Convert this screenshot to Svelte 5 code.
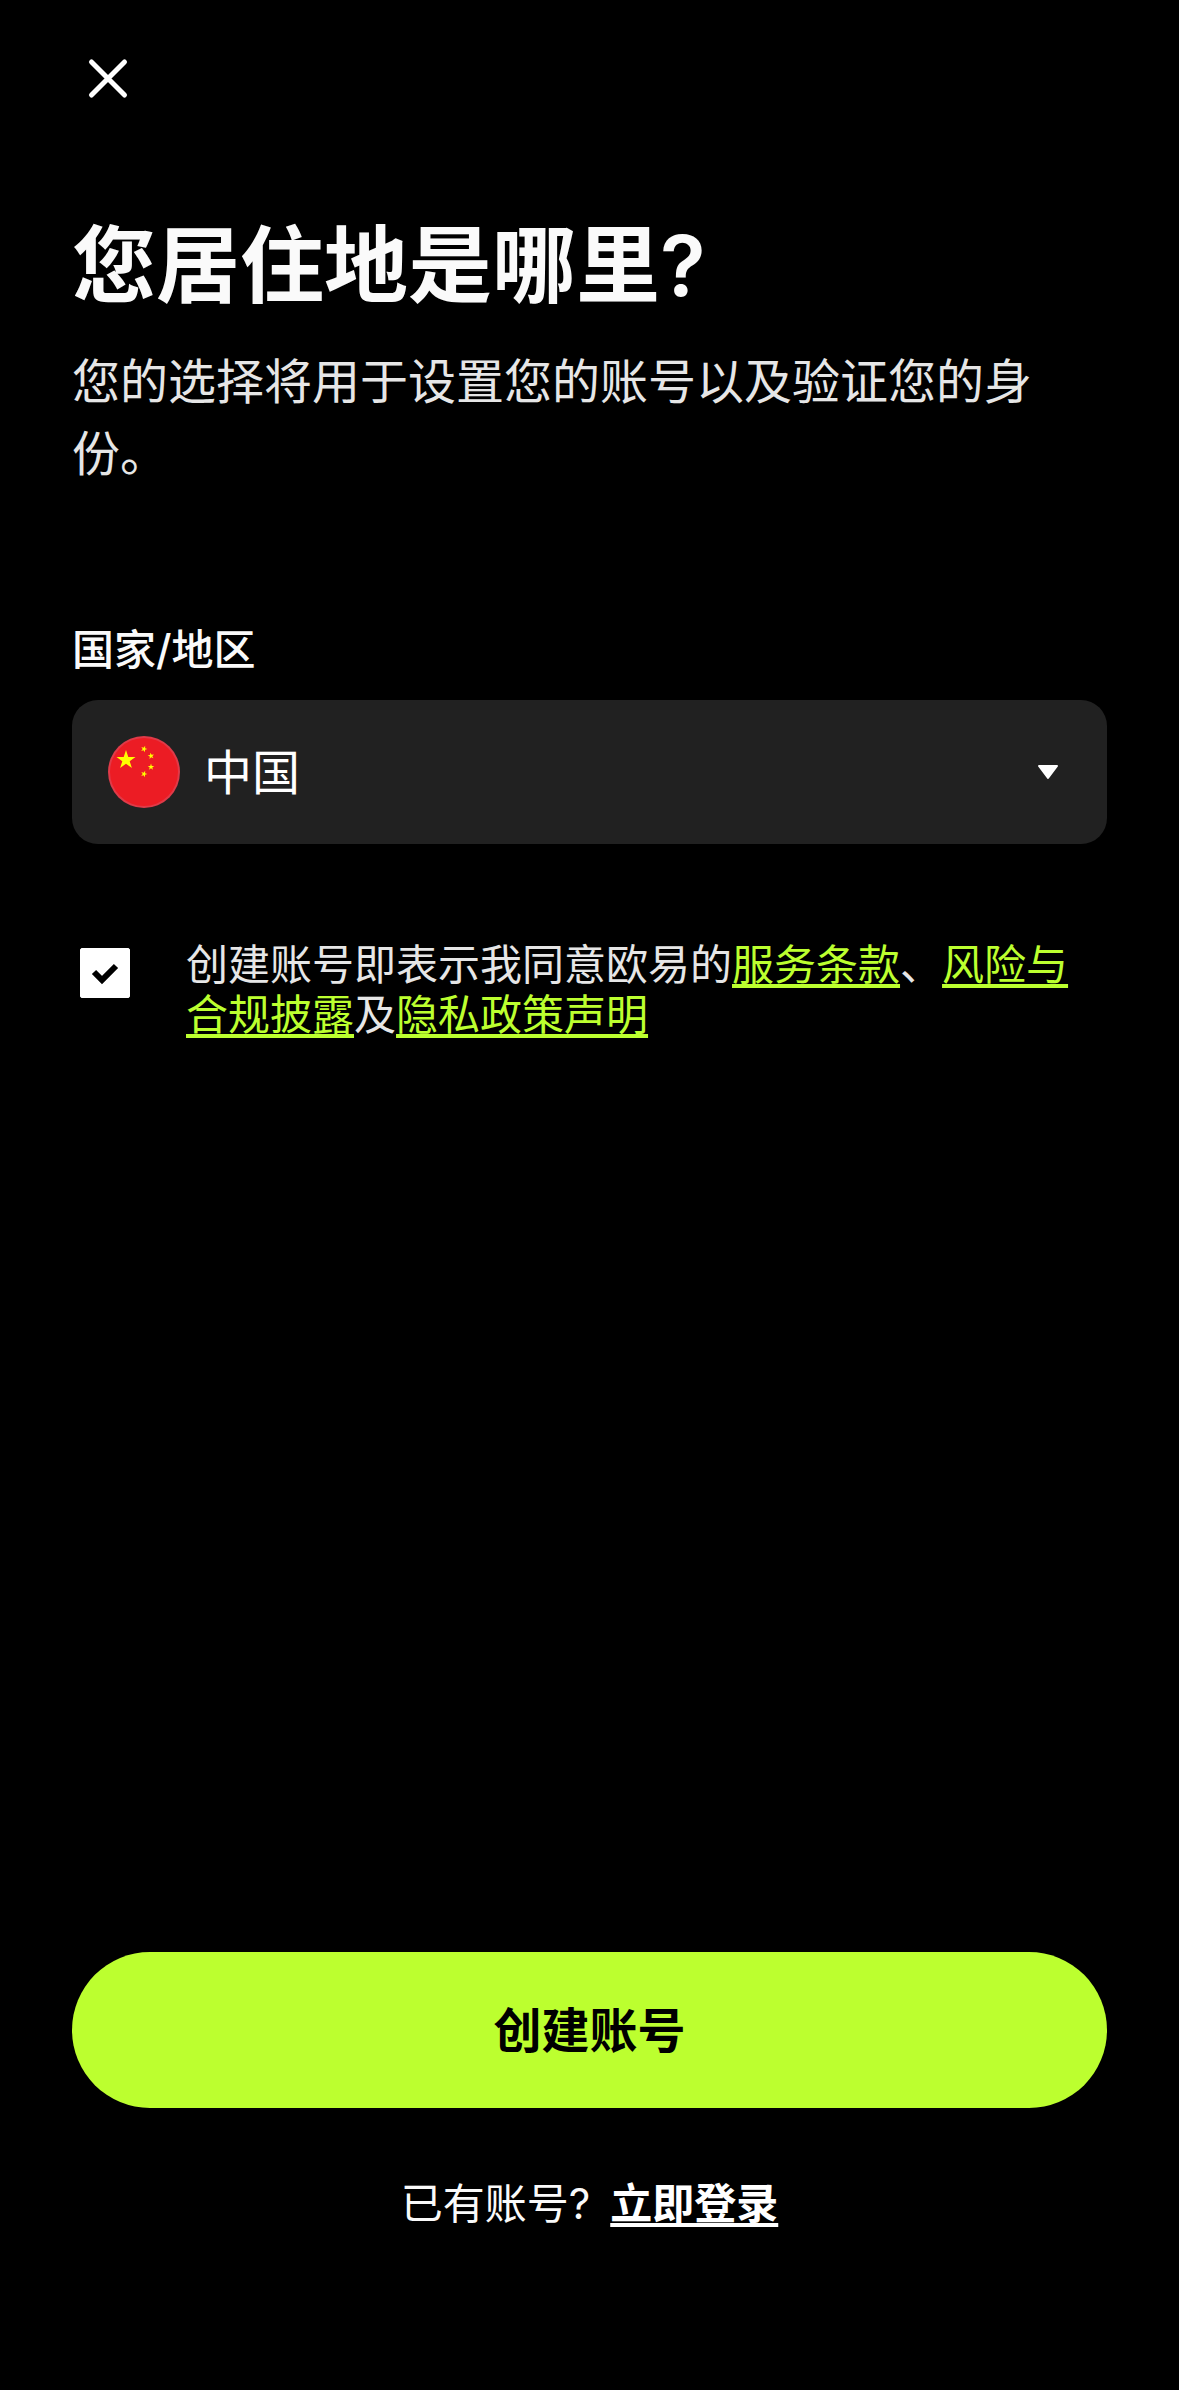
<script lang="ts">
    let country = "CN";
    let agreed = true;

    const countries = [
        { code: "CN", name: "中国" },
    ];

    // small stars of the flag: centre and rotation
    const smallStars = [
        { x: 36, y: 13, r: 20 },
        { x: 43, y: 20, r: -10 },
        { x: 43, y: 31, r: 0 },
        { x: 36, y: 38, r: 20 },
    ];

    const star = "M0 -10 L2.3 -3.1 L9.5 -3.1 L3.7 1.2 L5.9 8.1 L0 3.8 L-5.9 8.1 L-3.7 1.2 L-9.5 -3.1 L-2.3 -3.1 Z";
</script>

<main class="page">
    <header>
        <button class="close" type="button" aria-label="关闭">
            <svg viewBox="0 0 72 72" width="72" height="72">
                <path d="M19.5 20 L52.5 53 M52.5 20 L19.5 53" />
            </svg>
        </button>
    </header>

    <h1>您居住地是哪里?</h1>
    <p class="intro">您的选择将用于设置您的账号以及验证您的身份。</p>

    <label class="field-label" for="country">国家/地区</label>
    <div class="field">
        <svg class="flag" viewBox="0 0 72 72" width="72" height="72" aria-hidden="true">
            <circle cx="36" cy="36" r="36" fill="#e03a48" />
            <circle cx="36" cy="36" r="34" fill="#ec1c24" />
            <path d={star} fill="#ff0" transform="translate(18 24)" />
            {#each smallStars as s}
                <path d={star} fill="#ff0" transform={`translate(${s.x} ${s.y}) rotate(${s.r}) scale(0.34)`} />
            {/each}
        </svg>
        <select id="country" bind:value={country}>
            {#each countries as c}
                <option value={c.code}>{c.name}</option>
            {/each}
        </select>
        <svg class="arrow" viewBox="0 0 22 15" width="22" height="15" aria-hidden="true">
            <path d="M2 1 H20 L11 13 Z" />
        </svg>
    </div>

    <div class="terms">
        <input id="agree" type="checkbox" bind:checked={agreed} />
        <label for="agree">创建账号即表示我同意欧易的<a href="#terms">服务条款</a>、<a href="#risk">风险与合规披露</a>及<a href="#privacy">隐私政策声明</a></label>
    </div>

    <footer>
        <button class="submit" type="button" disabled={!agreed}>创建账号</button>
        <p class="login">已有账号?<a href="#login">立即登录</a></p>
    </footer>
</main>

<style>
    :global(body) {
        background-color: #000;
    }

    .page {
        box-sizing: border-box;
        min-height: 100vh;
        padding: 42px 72px 156px;
        display: flex;
        flex-direction: column;
        background-color: #000;
        color: #fafafa;
        font-family: Inter, "Noto Sans CJK SC", sans-serif;
    }

    button, select {
        font-family: inherit;
        border: none;
        cursor: pointer;
    }

    .close {
        display: block;
        padding: 0;
        background: none;
    }

    .close svg {
        display: block;
    }

    .close path {
        fill: none;
        stroke: #fff;
        stroke-width: 5;
        stroke-linecap: round;
    }

    h1 {
        margin: 98px 0 26px;
        font-size: 84px;
        line-height: 108px;
        font-weight: 600;
    }

    .intro {
        margin: 0;
        color: #e6e6e6;
        font-size: 48px;
        line-height: 72px;
    }

    .field-label {
        margin: 130px 0 20px;
        font-size: 42px;
        line-height: 60px;
        font-weight: 500;
    }

    .field {
        display: grid;
        grid-template-columns: 1fr;
        align-items: center;
    }

    .field > * {
        grid-area: 1 / 1;
    }

    .field svg {
        z-index: 1;
        pointer-events: none;
    }

    .flag {
        margin-left: 36px;
    }

    .arrow {
        justify-self: end;
        margin-right: 48px;
    }

    .arrow path {
        fill: #fff;
        stroke: #fff;
        stroke-width: 2;
        stroke-linejoin: round;
    }

    select {
        appearance: none;
        width: 100%;
        height: 144px;
        padding: 0 96px 0 132px;
        border-radius: 26px;
        background-color: #212121;
        color: #fff;
        font-size: 48px;
    }

    .terms {
        display: flex;
        align-items: flex-start;
        gap: 56px;
        margin-top: 96px;
        padding-left: 8px;
        color: #e6e6e6;
        font-size: 42px;
        line-height: 50px;
    }

    .terms input {
        appearance: none;
        flex: none;
        width: 50px;
        height: 50px;
        margin: 8px 0 0;
        border: 1px solid #fff;
        border-radius: 2px;
    }

    .terms input:checked {
        background: #fff url("data:image/svg+xml,%3Csvg xmlns='http://www.w3.org/2000/svg' viewBox='0 0 50 50'%3E%3Cpath d='M14 24 L22 32 L36 18' fill='none' stroke='%23000' stroke-width='6'/%3E%3C/svg%3E") center / 50px 50px no-repeat;
    }

    a {
        text-decoration: underline;
        text-decoration-thickness: 4px;
        text-decoration-skip-ink: none;
        text-underline-offset: 4px;
    }

    .terms a {
        color: #bcff2f;
    }

    footer {
        margin-top: auto;
    }

    .submit {
        display: block;
        width: 100%;
        height: 156px;
        padding: 0 0 6px;
        border-radius: 78px;
        background-color: #bcff2f;
        color: #000;
        font-size: 48px;
        font-weight: 700;
    }

    .login {
        display: flex;
        justify-content: center;
        gap: 20px;
        margin: 66px 0 0;
        font-size: 42px;
        line-height: 60px;
    }

    .login a {
        color: #fff;
        font-weight: 700;
    }
</style>
